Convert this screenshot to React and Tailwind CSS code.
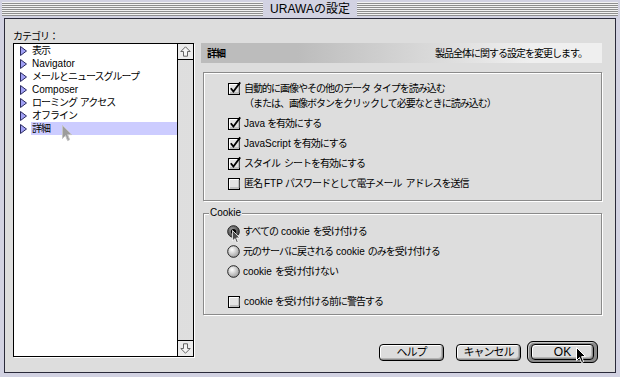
import React from "react";

const FONT = "font-['Liberation_Sans','Noto_Sans_CJK_JP',sans-serif]";

// Japanese runs are set a little tighter, like the old bitmap font
function J({ t }) {
  return t
    .split(/([\x00-\x7f]+)/)
    .filter(Boolean)
    .map((s, i) =>
      /^[\x00-\x7f]+$/.test(s) ? (
        <span key={i}>{s}</span>
      ) : (
        <span key={i} className="tracking-[-1px]">
          {s}
        </span>
      )
    );
}

function Triangle() {
  return (
    <svg width="7" height="10" viewBox="0 0 7 10" className="shrink-0">
      <polygon points="0.5,0.5 6.5,5 0.5,9.5" fill="#a0a0f4" stroke="#2a2a60" />
    </svg>
  );
}

function Arrow({ down }) {
  return (
    <svg width="11" height="11" viewBox="0 0 11 11" className={down ? "rotate-180" : ""}>
      <path d="M5.5 0.8 L10.2 5.5 H7.5 V10.2 H3.5 V5.5 H0.8 Z" fill="#f4f4f4" stroke="#666" />
    </svg>
  );
}

function Checkbox({ checked }) {
  return (
    <svg width="14" height="13" viewBox="0 0 14 13" className="shrink-0 overflow-visible">
      <rect x="0.5" y="1.5" width="11" height="11" fill="#e2e2e2" stroke="#000" />
      <path d="M1.5 11.5 V2.5 H10.5" fill="none" stroke="#fff" />
      <path d="M2 11 H11 V3" fill="none" stroke="#9a9a9a" />
      {checked && (
        <path d="M2.8 6.2 L5.4 9.6 L12.2 0.4" fill="none" stroke="#000" strokeWidth="1.8" />
      )}
    </svg>
  );
}

function Radio({ on, id }) {
  return (
    <svg width="13" height="13" viewBox="0 0 13 13" className="shrink-0">
      <defs>
        <radialGradient id={id} cx="0.38" cy="0.35" r="0.7">
          <stop offset="0" stopColor={on ? "#9a9a9a" : "#ffffff"} />
          <stop offset="1" stopColor={on ? "#3a3a3a" : "#9c9c9c"} />
        </radialGradient>
      </defs>
      <circle cx="6.5" cy="6.5" r="5.8" fill={`url(#${id})`} stroke="#222" />
      {on && <circle cx="6.5" cy="6.5" r="2.6" fill="#000" />}
    </svg>
  );
}

function Cursor({ className, fill = "#000", stroke = "#fff" }) {
  return (
    <svg width="11" height="17" viewBox="0 0 11 17" className={className}>
      <path
        d="M0.5 0.5 V13.5 L3.5 10.5 L5.6 15.6 L7.6 14.7 L5.6 9.6 H9.6 Z"
        fill={fill}
        stroke={stroke}
      />
    </svg>
  );
}

function Button({ label }) {
  return (
    <button className="w-[65px] h-[17px] rounded-[4px] border border-black bg-[#dcdcdc] shadow-[inset_1px_1px_0_#fff,inset_-1px_-1px_0_#8c8c8c,inset_-2px_-2px_0_#b4b4b4] text-[11px] leading-none flex items-center justify-center">
      <J t={label} />
    </button>
  );
}

const categories = [
  "表示",
  "Navigator",
  "メールとニュースグループ",
  "Composer",
  "ローミング アクセス",
  "オフライン",
  "詳細",
];

export default function App() {
  return (
    <div className={`relative w-[620px] h-[377px] bg-[#d2d2e2] flex flex-col text-black ${FONT}`}>
      {/* Title bar */}
      <div className="h-[18px] px-[2px] pt-[2px] flex">
        <div className="flex-1 h-[14px] bg-[repeating-linear-gradient(to_bottom,#f2f2f2_0_1px,#8e8e8e_1px_2px)]" />
        <div className="h-[14px] px-[7px] flex items-center text-[12px] leading-none bg-[#d2d2e2]">
          URAWAの設定
        </div>
        <div className="flex-1 h-[14px] bg-[repeating-linear-gradient(to_bottom,#f2f2f2_0_1px,#8e8e8e_1px_2px)]" />
      </div>

      {/* Window body */}
      <div className="mx-[4px] mb-[4px] flex-1 border border-[#2a2a3a] bg-[#dddddd] flex pl-[8px] pr-[13px] pt-[11px] text-[10px]">
        {/* Category column */}
        <div className="flex flex-col">
          <div className="h-[13px] leading-[13px]">
            <J t="カテゴリ：" />
          </div>
          <div className="w-[181px] h-[314px] border border-black bg-white flex shadow-[1px_1px_0_#fff]">
            <div className="flex-1 flex flex-col">
              {categories.map((c, i) => (
                <div key={c} className="h-[13px] flex items-center pl-[6px]">
                  <Triangle />
                  <div
                    className={`ml-[4px] flex-1 h-full pl-[1px] leading-[13px] whitespace-nowrap ${
                      i === 6 ? "bg-[#ccccff]" : ""
                    }`}
                  >
                    <J t={c} />
                  </div>
                </div>
              ))}
            </div>
            <div className="w-[16px] border-l border-black flex flex-col bg-[#e6e6e6]">
              <div className="h-[16px] border-b border-black bg-[#ececec] flex items-center justify-center">
                <Arrow />
              </div>
              <div className="flex-1 bg-[radial-gradient(#d4d4d4_0.6px,transparent_0.8px)] bg-[length:2px_2px]" />
              <div className="h-[16px] border-t border-black bg-[#ececec] flex items-center justify-center">
                <Arrow down />
              </div>
            </div>
          </div>
        </div>

        {/* Settings column */}
        <div className="ml-[7px] flex-1 flex flex-col">
          <div className="mt-[13px] h-[20px] flex items-center justify-between pl-[6px] pr-[15px] bg-[linear-gradient(to_right,#bcbcbc_24%,#efefef_82%)]">
            <span className="font-bold">
              <J t="詳細" />
            </span>
            <span>
              <J t="製品全体に関する設定を変更します。" />
            </span>
          </div>

          <div className="mt-[9px] ml-[2px] h-[129px] border border-[#8a8a8a] shadow-[inset_1px_1px_0_#fff,1px_1px_0_#fff] pl-[24px] pt-[8px] flex flex-col gap-[5px] leading-[15px]">
            <div className="flex items-start gap-[2px]">
              <div className="h-[15px] flex items-center">
                <Checkbox checked />
              </div>
              <div>
                <div><J t="自動的に画像やその他のデータ タイプを読み込む" /></div>
                <div><J t="（または、画像ボタンをクリックして必要なときに読み込む）" /></div>
              </div>
            </div>
            {[
              ["Javaを有効にする", true],
              ["JavaScriptを有効にする", true],
              ["スタイル シートを有効にする", true],
              ["匿名 FTP パスワードとして電子メール アドレスを送信", false],
            ].map(([t, c]) => (
              <div key={t} className="h-[15px] flex items-center gap-[2px]">
                <Checkbox checked={c} />
                <J t={t} />
              </div>
            ))}
          </div>

          <div className="relative mt-[12px] ml-[2px] h-[102px] border border-[#8a8a8a] shadow-[inset_1px_1px_0_#fff,1px_1px_0_#fff] pl-[23px] pt-[10px] flex flex-col gap-[5px] leading-[15px]">
            <span className="absolute -top-[8px] left-[5px] px-[1px] bg-[#dddddd] leading-[13px]">
              Cookie
            </span>
            {[
              ["すべての cookie を受け付ける", true],
              ["元のサーバに戻される cookie のみを受け付ける", false],
              ["cookie を受け付けない", false],
            ].map(([t, on], i) => (
              <div key={t} className="h-[15px] flex items-center gap-[3px]">
                <Radio on={on} id={`rg${i}`} />
                <J t={t} />
              </div>
            ))}
            <div className="mt-[10px] h-[15px] flex items-center gap-[2px] pl-[1px]">
              <Checkbox />
              <J t="cookie を受け付ける前に警告する" />
            </div>
          </div>

          <div className="mt-[26px] pr-[4px] flex items-center justify-end">
            <Button label="ヘルプ" />
            <div className="w-[12px]" />
            <Button label="キャンセル" />
            <div className="w-[6px]" />
            <div className="w-[71px] h-[22px] rounded-[6px] border border-black bg-[#8a8a8a] shadow-[inset_1px_1px_0_#c8c8c8] px-[3px] py-[2px]">
              <button className="w-full h-full rounded-[4px] border border-black bg-[#dcdcdc] shadow-[inset_1px_1px_0_#fff,inset_-1px_-1px_0_#8c8c8c,inset_-2px_-2px_0_#b4b4b4] text-[12px] leading-none flex items-center justify-center">
                OK
              </button>
            </div>
          </div>
        </div>
      </div>

      {/* Pointers */}
      <Cursor className="absolute left-[62px] top-[125px]" fill="#9c9c9c" stroke="#c4c4c4" />
      <Cursor className="absolute left-[232px] top-[230px] w-[9px] h-[14px]" fill="#4a4a4a" stroke="#fff" />
      <Cursor className="absolute left-[576px] top-[347px]" />
    </div>
  );
}
